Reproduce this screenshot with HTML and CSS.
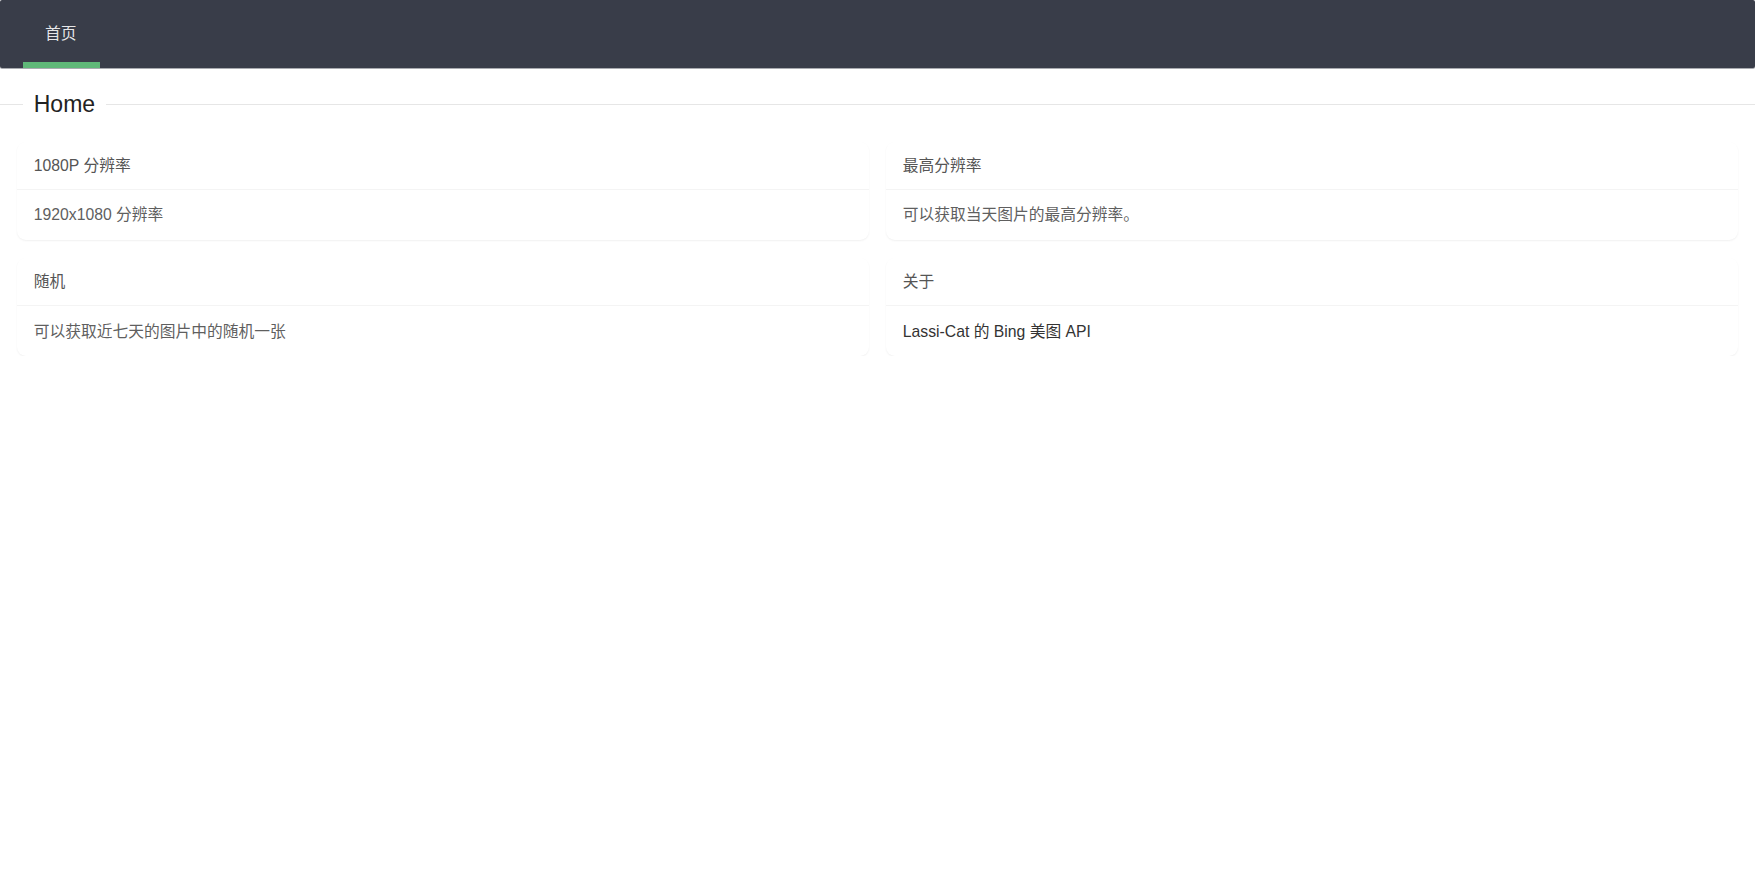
FILE: index.html
```html
<!DOCTYPE html>
<html lang="zh-CN">
<head>
<meta charset="utf-8">
<title>Home</title>
<link rel="stylesheet" href="styles.css">
</head>
<body>
<header class="nav">
  <ul class="nav-list">
    <li class="nav-item active"><a href="#">首页</a></li>
  </ul>
</header>
<fieldset class="field-title">
  <legend>Home</legend>
</fieldset>
<main class="grid">
  <section class="card">
    <div class="card-header">1080P 分辨率</div>
    <div class="card-body">1920x1080 分辨率</div>
  </section>
  <section class="card">
    <div class="card-header">最高分辨率</div>
    <div class="card-body">可以获取当天图片的最高分辨率。</div>
  </section>
  <section class="card">
    <div class="card-header">随机</div>
    <div class="card-body">可以获取近七天的图片中的随机一张</div>
  </section>
  <section class="card">
    <div class="card-header">关于</div>
    <div class="card-body"><a class="link" href="#">Lassi-Cat 的 Bing 美图 API</a></div>
  </section>
</main>
</body>
</html>
```

FILE: styles.css
```css
html, body {
  margin: 0;
  padding: 0;
  background: #fff;
}
body {
  font-family: "Liberation Sans", Arial, "Noto Sans CJK SC", sans-serif;
  font-size: 15.75px;
  color: #5f5f5f;
}
.nav {
  height: 67.5px;
  background: #393d49;
  border-radius: 2px;
  box-shadow: 0 1px 0 #a9abb0;
  padding: 0 22.5px;
  box-sizing: border-box;
}
.nav-list {
  list-style: none;
  margin: 0;
  padding: 0;
  display: flex;
  height: 100%;
}
.nav-item {
  position: relative;
  line-height: 67.5px;
}
.nav-item a {
  display: block;
  padding: 0 23.5px 0 22.5px;
  color: rgba(255, 255, 255, 0.88);
  text-decoration: none;
  font-size: 15.75px;
}
.nav-item.active::after {
  content: "";
  position: absolute;
  left: 0;
  right: 0;
  bottom: 0;
  height: 5.6px;
  background: #5fb878;
}
.field-title {
  margin: 12.25px 0 0;
  padding: 0;
  border: 0;
  border-top: 1px solid #e6e6e6;
  min-width: 0;
}
.field-title legend {
  margin-left: 22.5px;
  padding: 0 11.25px;
  font-size: 23px;
  line-height: 49.5px;
  font-weight: 300;
  color: #222;
}
.grid {
  display: grid;
  grid-template-columns: 1fr 1fr;
  column-gap: 16.875px;
  row-gap: 18.5px;
  padding: 12.5px 16.875px 0;
}
.card {
  background: #fff;
  border-radius: 9px;
  box-shadow: 0 1px 2px 0 rgba(0, 0, 0, 0.06);
}
.card-header {
  height: 47.25px;
  line-height: 47.25px;
  padding: 0 16.875px;
  border-bottom: 1px solid #f4f4f4;
  color: #555;
}
.card-body {
  padding: 11.25px 16.875px;
  line-height: 27px;
  color: #5f5f5f;
}
.link {
  color: #333;
  text-decoration: none;
}
```
